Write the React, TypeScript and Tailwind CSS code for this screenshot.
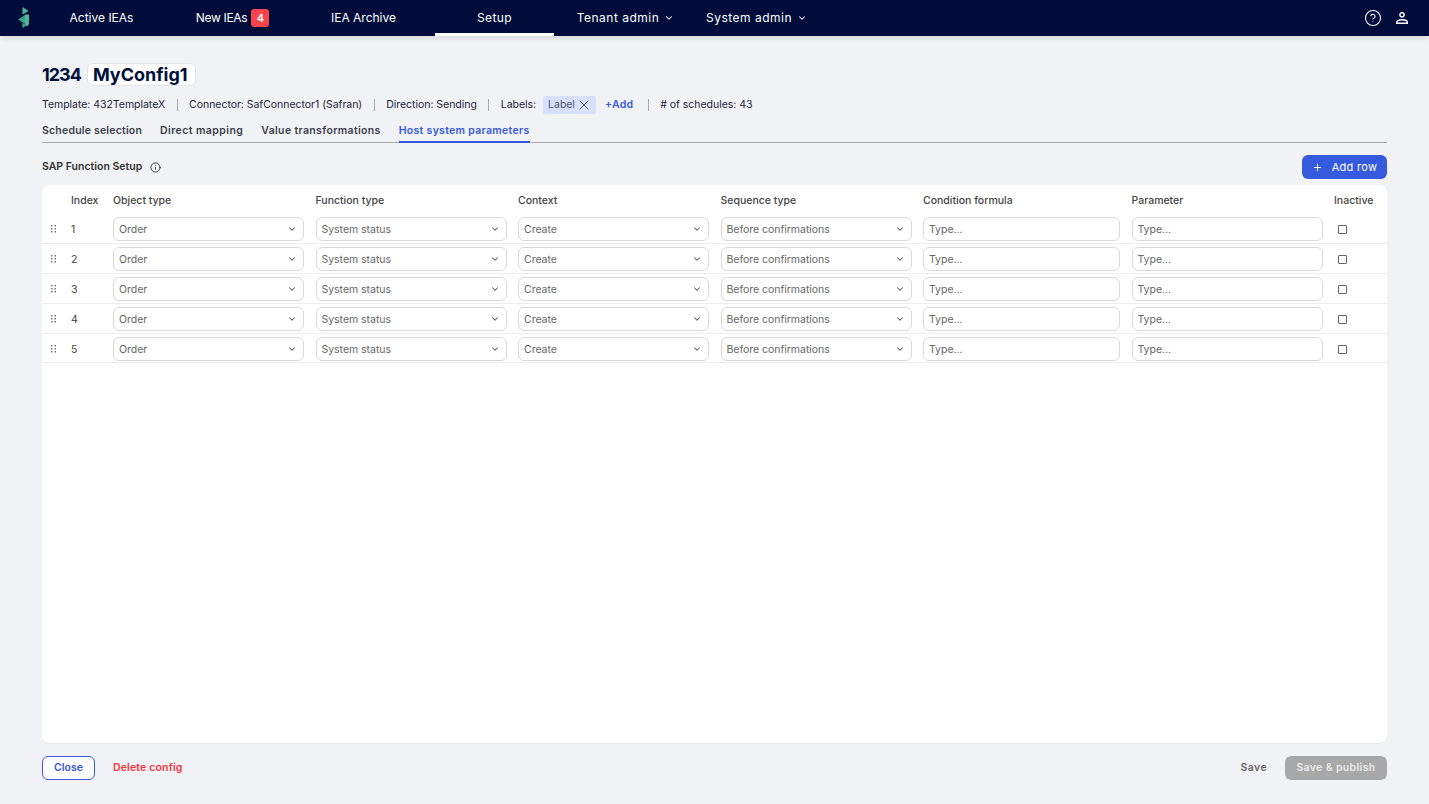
import React from "react";
import { ChevronDown, CircleHelp, Info, Plus, X } from "lucide-react";

const rows = [1, 2, 3, 4, 5];
const columns = ["Object type", "Function type", "Context", "Sequence type", "Condition formula", "Parameter", "Inactive"];
const gridCols = "grid grid-cols-[59.5px_191px_191px_191px_191px_197px_191px_53px] gap-x-[11.5px]";

const Logo = () => (
    <svg viewBox="0 0 13 22" className="w-[13px] h-[22px]" aria-hidden="true">
        <path d="M5.500 0l6 4-6 3.500z" fill="#4fb394" />
        <path d="M1 12.500L8 8v9z" fill="#3f9f85" />
        <path d="M8 7.500h4V16c0 2-1 3-3 3H8z" fill="#4fb394" />
        <path d="M5 16l5 2-4.500 3z" fill="#3f9f85" />
    </svg>
);

const DragDots = () => (
    <svg viewBox="0 0 6 7.500" className="w-[6px] h-[7.5px]" aria-hidden="true">
        {[0, 3, 6].map((y) => (
            <g key={y} fill="#777">
                <rect x="0" y={y} width="1.500" height="1.500" />
                <rect x="3.500" y={y} width="1.500" height="1.500" />
            </g>
        ))}
    </svg>
);

const UserIcon = () => (
    <svg viewBox="0 0 12 12" className="w-3 h-3" aria-hidden="true" fill="none" stroke="#fff" strokeWidth="1.400">
        <circle cx="6" cy="2.800" r="2.100" />
        <path d="M.7 11.300v-1c0-1.700 2.700-2.600 5.300-2.600s5.300.9 5.300 2.600v1z" />
    </svg>
);

const NavItem: React.FC<{ active?: boolean; className?: string; children: React.ReactNode }> = ({ active, className = "", children }) => (
    <div className={`w-[119px] h-full flex items-center justify-center text-[12px] text-white border-b-[3px] pt-[3px] ${active ? "border-white" : "border-transparent"} ${className}`}>
        {children}
    </div>
);

const Select: React.FC<{ value: string }> = ({ value }) => (
    <div className="h-6 flex items-center justify-between pl-[5px] pr-[6px] bg-white border border-[#d9d9d9] rounded-md text-[10.5px] tracking-[-0.03px] text-[#666]">
        <span className="pt-px">{value}</span>
        <ChevronDown className="w-[10px] h-[10px] text-[#555]" strokeWidth={2.5} />
    </div>
);

const TextInput = () => (
    <input
        type="text"
        placeholder="Type..."
        className="h-6 w-full px-[5px] bg-white border border-[#d9d9d9] rounded-md text-[10.5px] placeholder:text-[#666] outline-none"
    />
);

const Divider = () => <span className="w-px h-[12px] bg-[#aaa]" />;

export default function App() {
    return (
        <div className="h-[804px] bg-[#f1f2f6] flex flex-col overflow-hidden font-['Inter',sans-serif] text-[#00103d]">
            <header className="h-9 shrink-0 bg-[#000d3b] flex items-center shadow-[0_2px_6px_rgba(0,0,0,0.12)] z-10">
                <div className="w-[42px] pl-[17px] flex items-center">
                    <Logo />
                </div>
                <nav className="flex gap-3 h-full">
                    <NavItem>Active IEAs</NavItem>
                    <NavItem>
                        <span className="tracking-[-0.3px]">New IEAs</span>
                        <span className="ml-1 w-[18px] h-[18px] rounded-[3px] bg-[#f8444a] text-[11px] font-semibold flex items-center justify-center">4</span>
                    </NavItem>
                    <NavItem>IEA Archive</NavItem>
                    <NavItem active className="tracking-[0.4px]">Setup</NavItem>
                    <NavItem className="tracking-[0.5px]">
                        Tenant admin
                        <ChevronDown className="w-[10px] h-[10px] ml-[5px]" strokeWidth={2.5} />
                    </NavItem>
                    <NavItem className="tracking-[0.5px]">
                        System admin
                        <ChevronDown className="w-[10px] h-[10px] ml-[5px]" strokeWidth={2.5} />
                    </NavItem>
                </nav>
                <div className="ml-auto flex items-center gap-[14px] pr-[21px] text-white">
                    <CircleHelp className="w-[18px] h-[18px]" strokeWidth={1.400} />
                    <UserIcon />
                </div>
            </header>

            <main className="flex-1 flex flex-col px-[42px]">
                <div className="mt-[27px] flex items-center h-[23px]">
                    <span className="text-[18px] font-bold tracking-[-1px]">1234</span>
                    <span className="ml-[6px] h-[23px] pl-[5px] pr-[7px] flex items-center bg-white border border-[#e4e5ea] rounded-md text-[18px] font-bold">MyConfig1</span>
                </div>

                <div className="mt-2 h-[20px] pt-px flex items-center text-[10.5px] tracking-[-0.03px] text-[#1c2540]">
                    <span>Template: 432TemplateX</span>
                    <span className="mx-[11.5px] flex"><Divider /></span>
                    <span>Connector: SafConnector1 (Safran)</span>
                    <span className="mx-[11.5px] flex"><Divider /></span>
                    <span>Direction: Sending</span>
                    <span className="mx-[11.5px] flex"><Divider /></span>
                    <span>Labels:</span>
                    <span className="ml-[7px] h-[18px] w-[53px] pl-[5px] flex items-center rounded-[2px] bg-[#d8dffa] text-[#4b5470]">
                        Label
                        <X className="w-4 h-4 ml-[1.5px] shrink-0" strokeWidth={1.5} />
                    </span>
                    <span className="ml-[9px] font-semibold text-[#3659e0] tracking-[0.2px]">+Add</span>
                    <span className="ml-[15px] mr-[11px] flex"><Divider /></span>
                    <span>
                        # of schedules: 43
                    </span>
                </div>

                <div className="mt-[6px] h-[23px] flex gap-[18px] border-b border-[#aaa] text-[10.5px] font-semibold text-[#3b3f4a]">
                    <span className="pt-[3px] tracking-[0.2px]">Schedule selection</span>
                    <span className="pt-[3px] tracking-[0.42px]">Direct mapping</span>
                    <span className="pt-[3px] tracking-[0.35px]">Value transformations</span>
                    <span className="pt-[3px] h-[23px] tracking-[0.3px] text-[#3659e0] border-b-2 border-[#3659e0]">Host system parameters</span>
                </div>

                <div className="mt-3 h-6 flex items-center">
                    <span className="text-[10.5px] font-semibold text-[#333]">SAP Function Setup</span>
                    <Info className="w-[11px] h-[11px] ml-[8px] text-[#333]" />
                    <button type="button" className="ml-auto w-[85px] h-6 flex items-center justify-center gap-[9px] rounded-md bg-[#365add] text-white text-[11px] tracking-[0.3px]">
                        <Plus className="w-[11px] h-[11px]" />
                        Add row
                    </button>
                </div>

                <div className="mt-[6px] h-[559px] bg-white rounded-lg border-b border-[#e4e5ea]">
                    <div className={`${gridCols} h-[29px] pt-[2px] items-center text-[10.5px] font-medium text-[#444]`}>
                        <span className="pl-[29px]">Index</span>
                        {columns.map((c) => (
                            <span key={c}>{c}</span>
                        ))}
                    </div>
                    {rows.map((n) => (
                        <div key={n} className={`${gridCols} ${n === 5 ? "h-[29px] pb-px" : "h-[30px] pb-[2px]"} pt-[3px] items-center border-b border-[#ededed]`}>
                            <div className="flex items-center text-[10.5px] text-[#444]">
                                <span className="w-[29px] pl-[9px] flex items-center"><DragDots /></span>
                                <span className="pt-px">{n}</span>
                            </div>
                            <Select value="Order" />
                            <Select value="System status" />
                            <Select value="Create" />
                            <Select value="Before confirmations" />
                            <TextInput />
                            <TextInput />
                            <div className="pl-[4px] flex items-center">
                                <span className="w-[9px] h-[9px] border border-[#666] rounded-[1px] bg-white" />
                            </div>
                        </div>
                    ))}
                </div>

                <div className="mt-3 h-6 flex items-center text-[10.5px] font-semibold">
                    <button type="button" className="w-[53px] h-6 rounded-md bg-white border border-[#365add] text-[#365add] font-semibold">Close</button>
                    <span className="ml-[18px] text-[#f8343c] tracking-[0.15px]">Delete config</span>
                    <span className="ml-auto text-[#666] tracking-[0.4px]">Save</span>
                    <button type="button" className="ml-[18px] w-[102px] h-6 rounded-md bg-[#a8a8a8] text-[#e8e8e8] font-semibold tracking-[0.35px]">Save &amp; publish</button>
                </div>
            </main>
        </div>
    );
}
